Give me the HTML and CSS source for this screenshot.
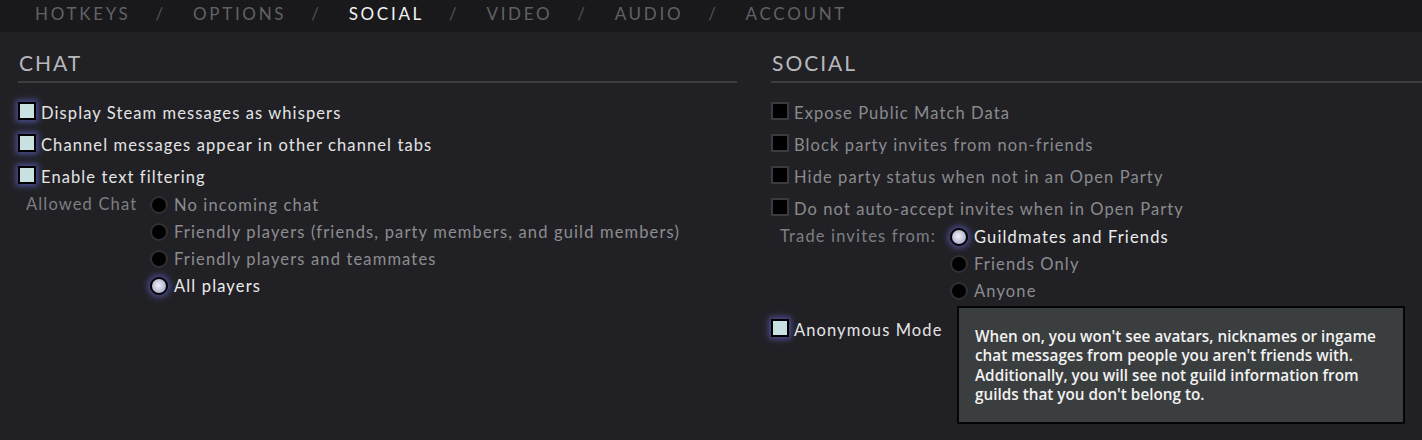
FILE: index.html
```html
<!DOCTYPE html>
<html lang="en">
<head>
    <meta charset="UTF-8">
    <title>Settings - Social</title>
    <link rel="stylesheet" href="styles.css">
</head>
<body>
    <nav class="tabs">
        <span class="tab">Hotkeys</span><span class="sep">/</span>
        <span class="tab">Options</span><span class="sep">/</span>
        <span class="tab active">Social</span><span class="sep">/</span>
        <span class="tab">Video</span><span class="sep">/</span>
        <span class="tab">Audio</span><span class="sep">/</span>
        <span class="tab">Account</span>
    </nav>

    <div class="panels">
        <section class="panel chat">
            <h2>Chat</h2>
            <div class="check on"><span class="box"></span>Display Steam messages as whispers</div>
            <div class="check on"><span class="box"></span>Channel messages appear in other channel tabs</div>
            <div class="check on"><span class="box"></span>Enable text filtering</div>
            <div class="radio-group">
                <div class="group-label">Allowed Chat</div>
                <div class="radios">
                    <div class="radio"><span class="dot"></span>No incoming chat</div>
                    <div class="radio"><span class="dot"></span>Friendly players (friends, party members, and guild members)</div>
                    <div class="radio"><span class="dot"></span>Friendly players and teammates</div>
                    <div class="radio on"><span class="dot"></span>All players</div>
                </div>
            </div>
        </section>

        <section class="panel social">
            <h2>Social</h2>
            <div class="check dim"><span class="box"></span>Expose Public Match Data</div>
            <div class="check dim"><span class="box"></span>Block party invites from non-friends</div>
            <div class="check dim"><span class="box"></span>Hide party status when not in an Open Party</div>
            <div class="check dim"><span class="box"></span>Do not auto-accept invites when in Open Party</div>
            <div class="radio-group trade">
                <div class="group-label">Trade invites from:</div>
                <div class="radios">
                    <div class="radio on"><span class="dot"></span>Guildmates and Friends</div>
                    <div class="radio"><span class="dot"></span>Friends Only</div>
                    <div class="radio"><span class="dot"></span>Anyone</div>
                </div>
            </div>
            <div class="anon">
                <div class="check on"><span class="box"></span>Anonymous Mode</div>
                <div class="tooltip">When on, you won't see avatars, nicknames or ingame chat messages from people you aren't friends with. Additionally, you will see not guild information from guilds that you don't belong to.</div>
            </div>
        </section>
    </div>
</body>
</html>
```

FILE: styles.css
```css
body {
    margin: 0;
    background-color: #212125;
    color: #ddd;
    font-family: Lato, "Open Sans", sans-serif;
    height: 440px;
    overflow: hidden;
}

.tabs {
    height: 32px;
    box-sizing: border-box;
    background-color: #19191b;
    display: flex;
    align-items: center;
    padding: 0 0 6px 35px;
    font-size: 17px;
    letter-spacing: 2.7px;
    text-transform: uppercase;
    color: #606166;
}

.tab.active {
    color: #f2f2f2;
}

.sep {
    margin: 0 27px 0 25px;
    color: #505156;
}

.panels {
    display: flex;
    padding-top: 18px;
}

.panel h2 {
    margin: 0 0 14px 0;
    padding: 0 0 6px 1px;
    font-size: 21px;
    font-weight: normal;
    letter-spacing: 2px;
    text-transform: uppercase;
    color: #b7b8bb;
    border-bottom: 2px solid #3d3e42;
}

.chat {
    width: 719px;
    margin-left: 18px;
}

.social {
    flex: 1;
    margin-left: 34px;
}

.check {
    display: flex;
    align-items: center;
    height: 32px;
    font-size: 16.5px;
    letter-spacing: 1.1px;
    color: #e4e4e4;
}

.box {
    width: 14px;
    height: 14px;
    border: 2px solid #3a3b3e;
    background-color: #000;
    margin-right: 5px;
    margin-top: -4px;
}

.check.on .box {
    border-color: #000;
    background-color: #c9e2e1;
    box-shadow: 0 0 6px 2px rgba(110, 110, 230, 0.6);
}

.check.dim {
    color: #8a8b8e;
}

.radio-group {
    display: flex;
    font-size: 16.5px;
    letter-spacing: 1.15px;
    margin-left: 8px;
    margin-top: -2px;
}

.group-label {
    color: #7d7e81;
    width: 124px;
    height: 27px;
    line-height: 27px;
}

.radio {
    display: flex;
    align-items: center;
    height: 27px;
    color: #8c8d90;
}

.dot {
    width: 14px;
    height: 14px;
    border-radius: 50%;
    background-color: #000;
    border: 2px solid #2f3033;
    margin-right: 6px;
}

.radio.on {
    color: #ececec;
}

.radio.on .dot {
    background: radial-gradient(circle at 45% 45%, #f0f0fa 0, #b8bbd0 60%, #9a9db5 100%);
    border-color: #050508;
    box-shadow: 0 0 6px 2px rgba(110, 110, 230, 0.6);
}

.trade {
    margin-left: 9px;
    margin-top: -2px;
}

.trade .group-label {
    width: 170px;
}

.anon {
    display: flex;
    align-items: flex-start;
    margin-top: 2px;
}

.anon .check {
    width: 186px;
    margin-top: 8px;
}

.tooltip {
    width: 404px;
    padding: 19px 24px 17px 16px;
    background-color: #3b3e3f;
    border: 2px solid #050505;
    color: #f2f2f2;
    font-family: "Open Sans", sans-serif;
    font-weight: 600;
    font-size: 15.3px;
    line-height: 19.4px;
}
```
